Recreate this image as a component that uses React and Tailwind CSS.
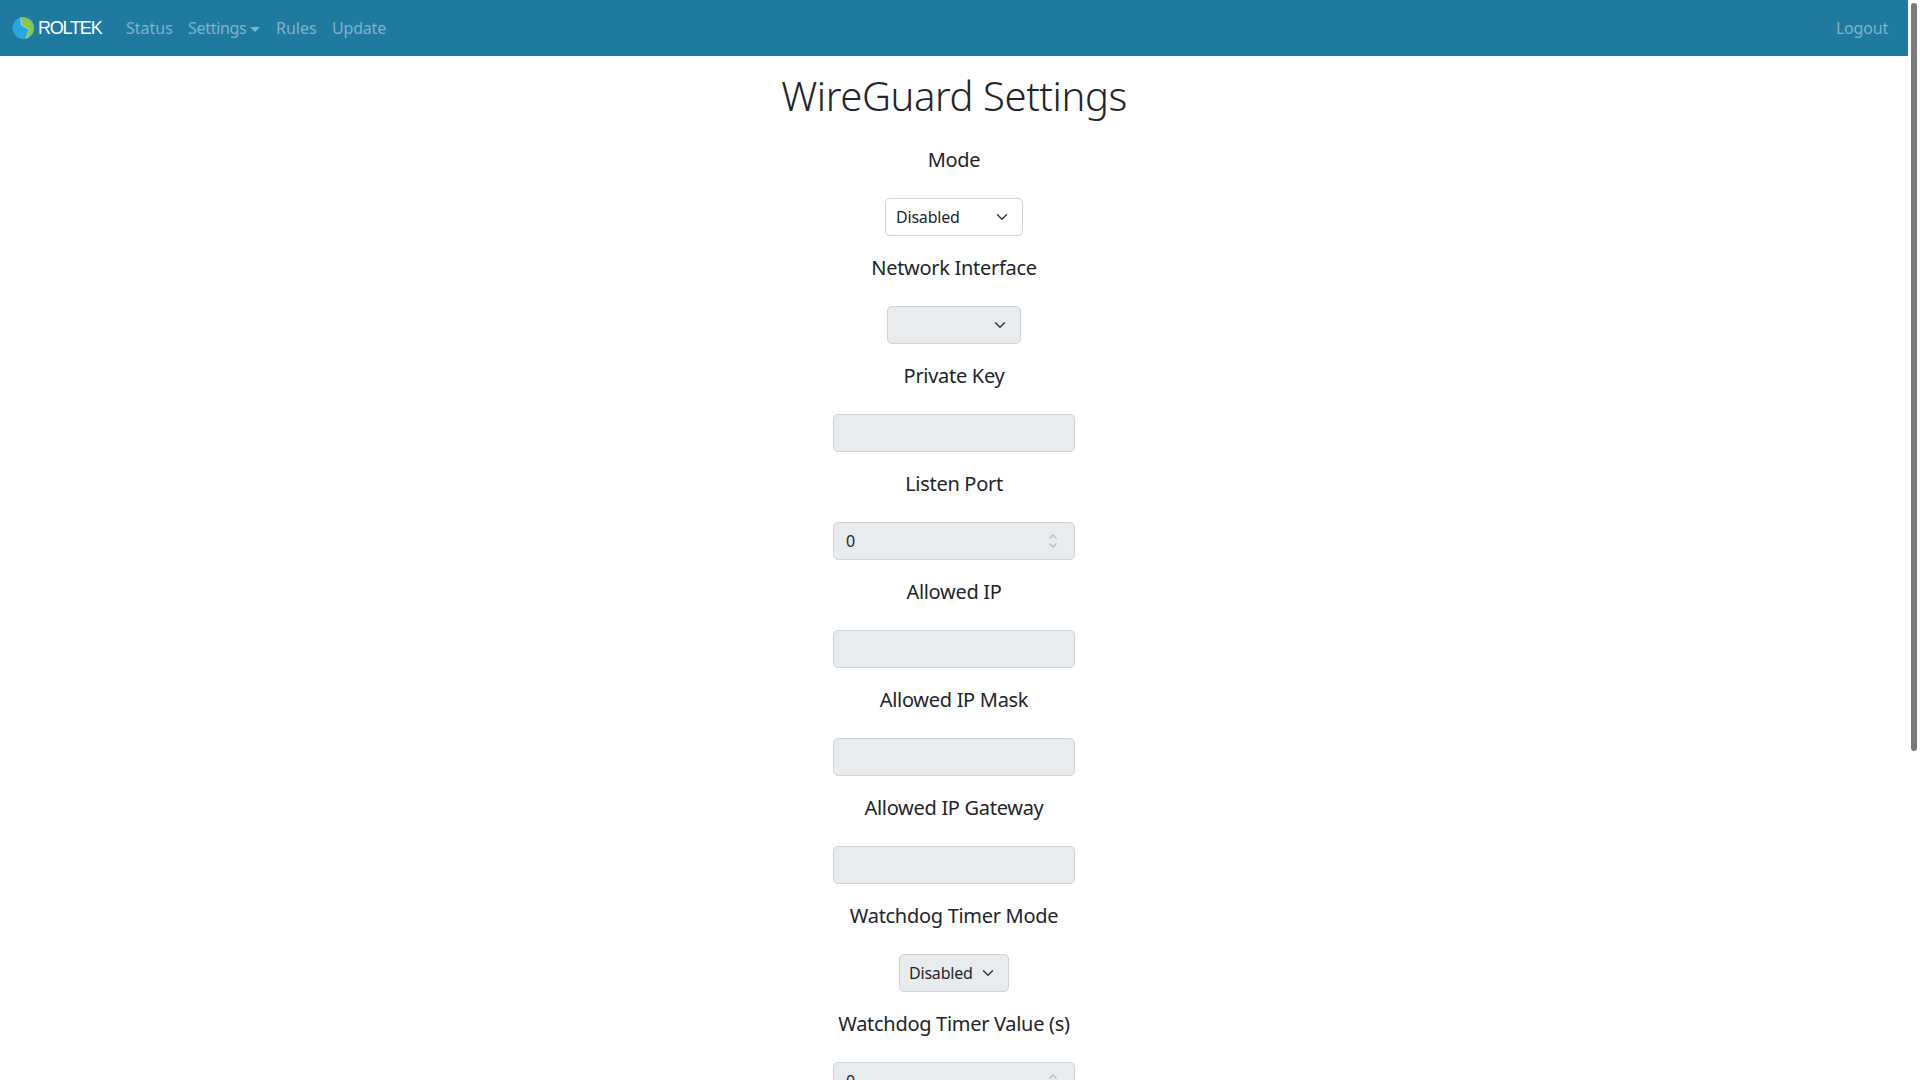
const font = "font-['Noto_Sans','Open_Sans',sans-serif]";

function Logo() {
  return (
    <svg width="23" height="24" viewBox="0 0 24 24" className="shrink-0">
      <circle cx="12" cy="12" r="11.5" fill="#29a7df" />
      <path d="M9 0.9 A11.5 11.5 0 0 1 14.5 23.2 L18 13.5 L10 9 Z" fill="#8dc63f" />
      <path d="M9 0.9 L10 9 L18 13.5 L14.5 23.2" fill="none" stroke="#ffffff" strokeOpacity="0.6" strokeWidth="0.8" />
    </svg>
  );
}

function Chevron() {
  return (
    <svg width="16" height="12" viewBox="0 0 16 16" className="shrink-0">
      <path d="m2 5 6 6 6-6" fill="none" stroke="#343a40" strokeWidth="2" strokeLinecap="round" strokeLinejoin="round" />
    </svg>
  );
}

function Spinner() {
  return (
    <svg width="10" height="16" viewBox="0 0 10 16" className="shrink-0">
      <path d="M1.5 5.5 5 2l3.5 3.5M1.5 10.5 5 14l3.5-3.5" fill="none" stroke="#b9bdc2" strokeWidth="1.4" />
    </svg>
  );
}

function Select({ value, width, disabled }) {
  return (
    <div className={`flex h-[38px] items-center justify-between rounded-[5px] border border-[#ced4da] pr-[12px] text-base leading-6 tracking-[-0.2px] text-[#212529] ${width} ${disabled ? "bg-[#e9ecef]" : "bg-white"}`}>
      <span>{value}</span>
      <Chevron />
    </div>
  );
}

function Input({ value }) {
  return (
    <div className="flex h-[38px] w-[242px] items-center justify-between rounded-[5px] border border-[#ced4da] bg-[#e9ecef] pl-[12px] pr-[16px] text-base leading-6 text-[#212529]">
      <span>{value}</span>
      {value !== undefined && <Spinner />}
    </div>
  );
}

function Field({ label, children }) {
  return (
    <div className="flex flex-col items-center pt-5">
      <div className="mb-[26px] text-[20px] leading-6 font-normal tracking-[-0.3px] text-[#212529]">{label}</div>
      {children}
    </div>
  );
}

export default function App() {
  return (
    <div className={`flex h-screen overflow-hidden bg-white ${font}`}>
      <main className="min-w-0 flex-1">
        <nav className="flex h-14 items-center justify-between bg-[#1f7a9f] pl-3 pr-5 text-base leading-6 text-[#7fb3ca]">
          <div className="flex items-center">
            <div className="flex w-[114px] items-center">
              <Logo />
              <span className="ml-[3px] font-['Liberation_Sans',sans-serif] text-[18px] leading-6 tracking-[-1.2px] text-white">ROLTEK</span>
            </div>
            <div className="flex items-center">
              <span className="w-[46px] whitespace-nowrap">Status</span>
              <span className="ml-4 flex w-[72px] items-center tracking-[-0.3px] whitespace-nowrap">
                Settings
                <span className="ml-1 mt-[2px] h-0 w-0 border-x-[5px] border-t-[5px] border-x-transparent border-t-current" />
              </span>
              <span className="ml-4 w-[40px] whitespace-nowrap">Rules</span>
              <span className="ml-4 w-[54px] tracking-[-0.2px] whitespace-nowrap">Update</span>
            </div>
          </div>
          <span className="tracking-[-0.2px]">Logout</span>
        </nav>

        <h1 className="mt-4 mb-[9px] text-center text-[40px] leading-[48px] font-light tracking-[-0.4px] text-[#212529]">WireGuard Settings</h1>

        <div className="-mt-px">
          <Field label="Mode"><Select value="Disabled" width="w-[138px] pl-[10px]" /></Field>
          <Field label="Network Interface"><Select width="w-[134px] pl-[10px]" disabled /></Field>
          <Field label="Private Key"><Input /></Field>
          <Field label="Listen Port"><Input value="0" /></Field>
          <Field label="Allowed IP"><Input /></Field>
          <Field label="Allowed IP Mask"><Input /></Field>
          <Field label="Allowed IP Gateway"><Input /></Field>
          <Field label="Watchdog Timer Mode"><Select value="Disabled" width="w-[110px] pl-[9px]" disabled /></Field>
          <Field label="Watchdog Timer Value (s)"><Input value="0" /></Field>
        </div>
      </main>
      <aside className="w-3 shrink-0 pt-[3px] pl-[3px]">
        <div className="h-[748px] w-[6px] rounded-[3px] bg-[#7a7a7a]" />
      </aside>
    </div>
  );
}
